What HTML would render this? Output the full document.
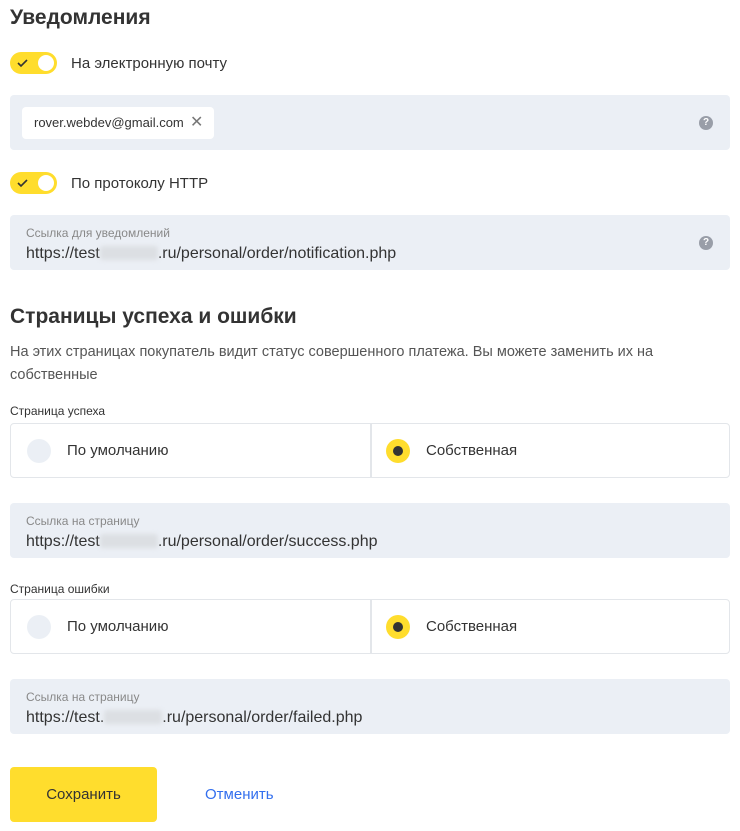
<!DOCTYPE html>
<html><head><meta charset="utf-8"><style>
*{box-sizing:border-box;margin:0;padding:0}
body{width:740px;height:831px;background:#fff;font-family:"Liberation Sans",sans-serif;color:#333;position:relative;overflow:hidden}
.a{position:absolute}
h2{position:absolute;left:10px;font-size:21px;font-weight:bold;color:#333;line-height:24px}
.tg{position:absolute;left:10px;width:47px;height:22px;border-radius:11px;background:#ffdd2d}
.tg .k{position:absolute;right:3px;top:3px;width:16px;height:16px;border-radius:50%;background:#fff}
.tg svg{position:absolute;left:7px;top:6px}
.tl{position:absolute;left:71px;font-size:15px;line-height:18px;color:#333}
.f{position:absolute;left:10px;width:720px;height:55px;background:#ebeff5;border-radius:4px}
.lb{position:absolute;left:16px;top:11px;font-size:12px;color:#888;line-height:14px}
.vl{position:absolute;left:16px;top:29px;font-size:16px;color:#333;line-height:19px;white-space:nowrap}
.blur{display:inline-block;width:58px;height:14px;background:#dcdfe3;vertical-align:-2px;border-radius:3px;filter:blur(2px)}
.q{position:absolute;right:17px;top:21px;width:14px;height:14px;border-radius:50%;background:#999ea8;color:#fff;font-size:10px;font-weight:bold;text-align:center;line-height:14px}
.rg{position:absolute;left:10px;width:720px;height:55px;border:1px solid #e3e6ea;border-radius:4px}
.rg .d{position:absolute;left:359px;top:0;width:2px;height:53px;background:#e3e6ea}
.rc{position:absolute;width:24px;height:24px;border-radius:50%;top:15px}
.rt{position:absolute;top:18px;font-size:15px;line-height:18px;color:#333}
.sl{position:absolute;left:10px;font-size:12px;color:#333;line-height:14px}
</style></head><body>
<h2 style="top:6px">Уведомления</h2>
<div class="tg" style="top:52px"><svg width="12" height="10" viewBox="0 0 12 10"><path d="M1 5l3 3 6-6" stroke="#333" stroke-width="1.6" fill="none"/></svg><div class="k"></div></div>
<div class="tl" style="top:55px">На электронную почту</div>
<div class="f" style="top:95px">
<div class="a" style="left:12px;top:12px;width:192px;height:32px;background:#fff;border-radius:4px;font-size:13px;line-height:32px;padding-left:12px;color:#333">rover.webdev@gmail.com<span class="a" style="left:168px;top:0;color:#777;font-size:16px">✕</span></div>
<div class="q">?</div></div>
<div class="tg" style="top:172px"><svg width="12" height="10" viewBox="0 0 12 10"><path d="M1 5l3 3 6-6" stroke="#333" stroke-width="1.6" fill="none"/></svg><div class="k"></div></div>
<div class="tl" style="top:175px">По протоколу HTTP</div>
<div class="f" style="top:215px"><div class="lb">Ссылка для уведомлений</div><div class="vl">https://test<span class="blur"></span>.ru/personal/order/notification.php</div><div class="q">?</div></div>
<h2 style="top:305px">Страницы успеха и ошибки</h2>
<div class="a" style="left:10px;top:341px;width:705px;font-size:14.5px;line-height:23px;color:#555">На этих страницах покупатель видит статус совершенного платежа. Вы можете заменить их на собственные</div>
<div class="sl" style="top:404px">Страница успеха</div>
<div class="rg" style="top:423px"><div class="d"></div>
<div class="rc" style="left:16px;background:#ebeff5"></div><div class="rt" style="left:56px">По умолчанию</div>
<div class="rc" style="left:375px;background:#ffdd2d"><div class="a" style="left:7px;top:7px;width:10px;height:10px;border-radius:50%;background:#333"></div></div><div class="rt" style="left:415px">Собственная</div></div>
<div class="f" style="top:503px"><div class="lb">Ссылка на страницу</div><div class="vl">https://test<span class="blur"></span>.ru/personal/order/success.php</div></div>
<div class="sl" style="top:582px">Страница ошибки</div>
<div class="rg" style="top:599px"><div class="d"></div>
<div class="rc" style="left:16px;background:#ebeff5"></div><div class="rt" style="left:56px">По умолчанию</div>
<div class="rc" style="left:375px;background:#ffdd2d"><div class="a" style="left:7px;top:7px;width:10px;height:10px;border-radius:50%;background:#333"></div></div><div class="rt" style="left:415px">Собственная</div></div>
<div class="f" style="top:679px"><div class="lb">Ссылка на страницу</div><div class="vl">https://test.<span class="blur"></span>.ru/personal/order/failed.php</div></div>
<div class="a" style="left:10px;top:767px;width:147px;height:55px;background:#ffdd2d;border-radius:4px;font-size:15px;line-height:55px;text-align:center;color:#333">Сохранить</div>
<div class="a" style="left:205px;top:786px;font-size:15px;line-height:18px;color:#336fee">Отменить</div>
</body></html>
